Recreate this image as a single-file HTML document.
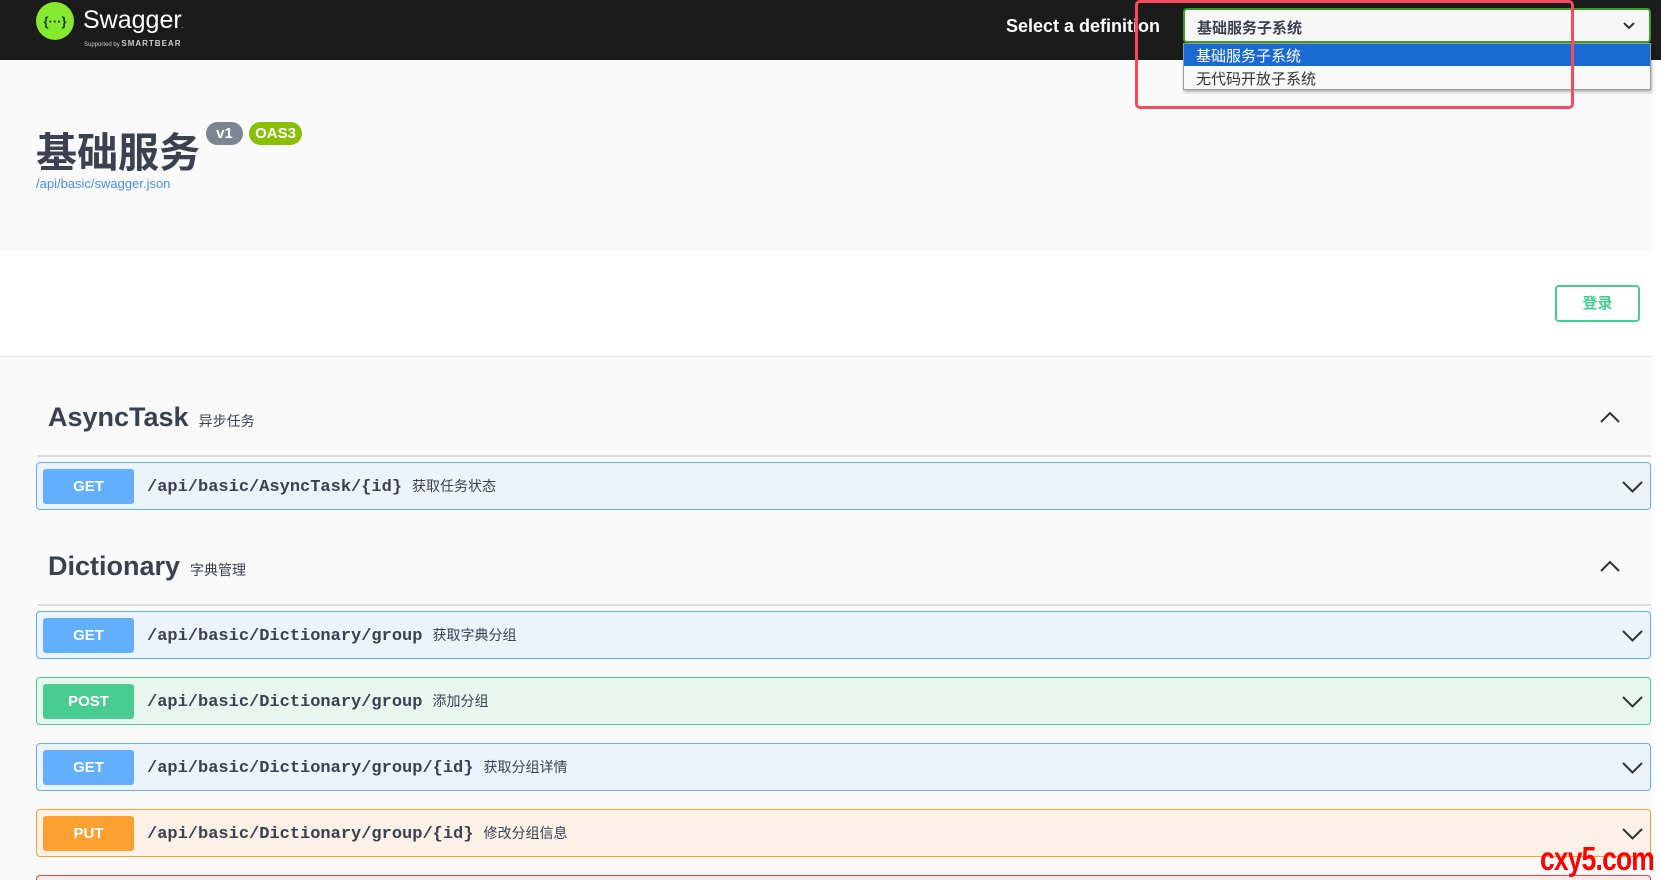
<!DOCTYPE html>
<html><head><meta charset="utf-8"><style>
*{margin:0;padding:0;box-sizing:border-box}
html,body{width:1661px;height:880px;overflow:hidden}
body{background:#fff;font-family:"Liberation Sans","Noto Sans CJK SC",sans-serif;position:relative;color:#3b4151}
.abs{position:absolute}
.top{left:0;top:0;width:1661px;height:60px;background:#1b1b1b}
.info{left:0;top:60px;width:1661px;height:191px;background:#fafafa}
.login{left:0;top:251px;width:1652px;height:106px;background:#fff;border-bottom:1px solid #e3e3e3}
.main{left:0;top:357px;width:1652px;height:523px;background:#fafafa}
.right{left:1652px;top:60px;width:9px;height:820px;background:#fff}
.op{position:absolute;left:36px;width:1615px;height:48px;border:1px solid;border-radius:4px}
.op .m{position:absolute;left:6px;top:6px;width:91px;height:35px;border-radius:3px;color:#fff;font-weight:bold;font-size:15px;text-align:center;line-height:35px}
.op .p{position:absolute;left:110px;top:13px;font-family:"Liberation Mono",monospace;font-weight:bold;font-size:17px;color:#3b4151;white-space:nowrap}
.op .p span{font-family:"Liberation Sans","Noto Sans CJK SC",sans-serif;font-weight:normal;font-size:14px;color:#3b4151;margin-left:10px}
.op svg{position:absolute;right:7px;top:18px}
.get{background:#ebf3fb;border-color:#61affe}.get .m{background:#61affe}
.post{background:#e8f6f0;border-color:#49cc90}.post .m{background:#49cc90}
.put{background:#fbf1e6;border-color:#fca130}.put .m{background:#fca130}
.del{background:#fbeaea;border-color:#f93e3e}
.tag{position:absolute;left:48px;font-size:27px;font-weight:bold;color:#3b4151}
.tag span{font-size:14px;font-weight:normal;margin-left:10px}
.line{position:absolute;left:37px;width:1614px;height:2px;background:#dcdcdc}
.up{position:absolute;left:1599px}
</style></head><body>
<div class="abs info"></div>
<div class="abs login"></div>
<div class="abs main"></div>
<div class="abs right"></div>
<div class="abs top"></div>
<svg class="abs" style="left:36px;top:2px" width="38" height="38" viewBox="0 0 38 38"><circle cx="19" cy="19" r="19" fill="#85ea2d"/><text x="19" y="24" text-anchor="middle" font-family="Liberation Sans,sans-serif" font-weight="bold" font-size="13" fill="#173647">{···}</text></svg>
<div class="abs" style="left:83px;top:6px;color:#fff;font-size:25px">Swagger<span style="font-size:6px">.</span></div>
<div class="abs" style="left:84px;top:39px;color:#ccc;font-size:6px">Supported by <b style="font-size:8px;letter-spacing:1px">SMARTBEAR</b></div>
<div class="abs" style="left:1006px;top:16px;color:#fff;font-size:18px;font-weight:bold">Select a definition</div>
<div class="abs" style="left:1183px;top:8px;width:468px;height:35px;background:#f7f7f7;border:2px solid #41982d;border-radius:4px;font-size:15px;font-weight:bold;color:#3b4151;padding:7px 0 0 12px">基础服务子系统
<svg style="position:absolute;right:14px;top:12px" width="12" height="8" viewBox="0 0 12 8"><path d="M1 1l5 5 5-5" stroke="#333" stroke-width="2" fill="none"/></svg></div>
<div class="abs" style="left:1183px;top:43px;width:468px;height:47px;background:#f8f8f8;border:1px solid #999;box-shadow:1px 2px 3px rgba(0,0,0,.3);font-size:15px">
<div style="height:22px;background:#1a6ad1;color:#fff;padding:1px 0 0 12px">基础服务子系统</div>
<div style="height:23px;color:#333;padding:2px 0 0 12px">无代码开放子系统</div></div>
<div class="abs" style="left:1135px;top:0;width:439px;height:109px;border:3px solid #f44c5e;border-radius:5px"></div>
<div class="abs" style="left:36px;top:119px;font-size:41px;font-weight:bold;color:#3b4151">基础服务</div>
<div class="abs" style="left:206px;top:122px;width:37px;height:23px;border-radius:12px;background:#7d8492;color:#fff;font-weight:bold;font-size:15px;text-align:center;line-height:23px">v1</div>
<div class="abs" style="left:249px;top:122px;width:53px;height:23px;border-radius:12px;background:#89bf04;color:#fff;font-weight:bold;font-size:15px;text-align:center;line-height:23px">OAS3</div>
<div class="abs" style="left:36px;top:176px;font-size:13px;color:#4990e2">/api/basic/swagger.json</div>
<div class="abs" style="left:1555px;top:285px;width:85px;height:37px;border:2px solid #49cc90;border-radius:4px;color:#49cc90;font-weight:bold;font-size:15px;text-align:center;line-height:33px;background:#fff">登录</div>
<div class="tag" style="top:402px">AsyncTask<span>异步任务</span></div>
<svg class="up" style="top:410px" width="22" height="14" viewBox="0 0 22 14"><path d="M2 12l9-9 9 9" stroke="#333" stroke-width="2" fill="none"/></svg>
<div class="line" style="top:455px"></div>
<div class="op get" style="top:462px"><div class="m">GET</div><div class="p">/api/basic/AsyncTask/{id}<span>获取任务状态</span></div><svg width="21" height="12" viewBox="0 0 21 12"><path d="M1 1l9.5 9.5L20 1" stroke="#333" stroke-width="2" fill="none"/></svg></div>
<div class="tag" style="top:551px">Dictionary<span>字典管理</span></div>
<svg class="up" style="top:559px" width="22" height="14" viewBox="0 0 22 14"><path d="M2 12l9-9 9 9" stroke="#333" stroke-width="2" fill="none"/></svg>
<div class="line" style="top:604px"></div>
<div class="op get" style="top:611px"><div class="m">GET</div><div class="p">/api/basic/Dictionary/group<span>获取字典分组</span></div><svg width="21" height="12" viewBox="0 0 21 12"><path d="M1 1l9.5 9.5L20 1" stroke="#333" stroke-width="2" fill="none"/></svg></div>
<div class="op post" style="top:677px"><div class="m">POST</div><div class="p">/api/basic/Dictionary/group<span>添加分组</span></div><svg width="21" height="12" viewBox="0 0 21 12"><path d="M1 1l9.5 9.5L20 1" stroke="#333" stroke-width="2" fill="none"/></svg></div>
<div class="op get" style="top:743px"><div class="m">GET</div><div class="p">/api/basic/Dictionary/group/{id}<span>获取分组详情</span></div><svg width="21" height="12" viewBox="0 0 21 12"><path d="M1 1l9.5 9.5L20 1" stroke="#333" stroke-width="2" fill="none"/></svg></div>
<div class="op put" style="top:809px"><div class="m">PUT</div><div class="p">/api/basic/Dictionary/group/{id}<span>修改分组信息</span></div><svg width="21" height="12" viewBox="0 0 21 12"><path d="M1 1l9.5 9.5L20 1" stroke="#333" stroke-width="2" fill="none"/></svg></div>
<div class="op del" style="top:875px;height:5px;border-bottom:none;border-radius:4px 4px 0 0"></div>
<div class="abs" style="left:1540px;top:840px;font-family:'Liberation Sans',sans-serif;font-weight:bold;font-size:33px;color:#f00;transform:scaleX(0.8);transform-origin:left;letter-spacing:-1px">cxy5.com</div>
</body></html>
